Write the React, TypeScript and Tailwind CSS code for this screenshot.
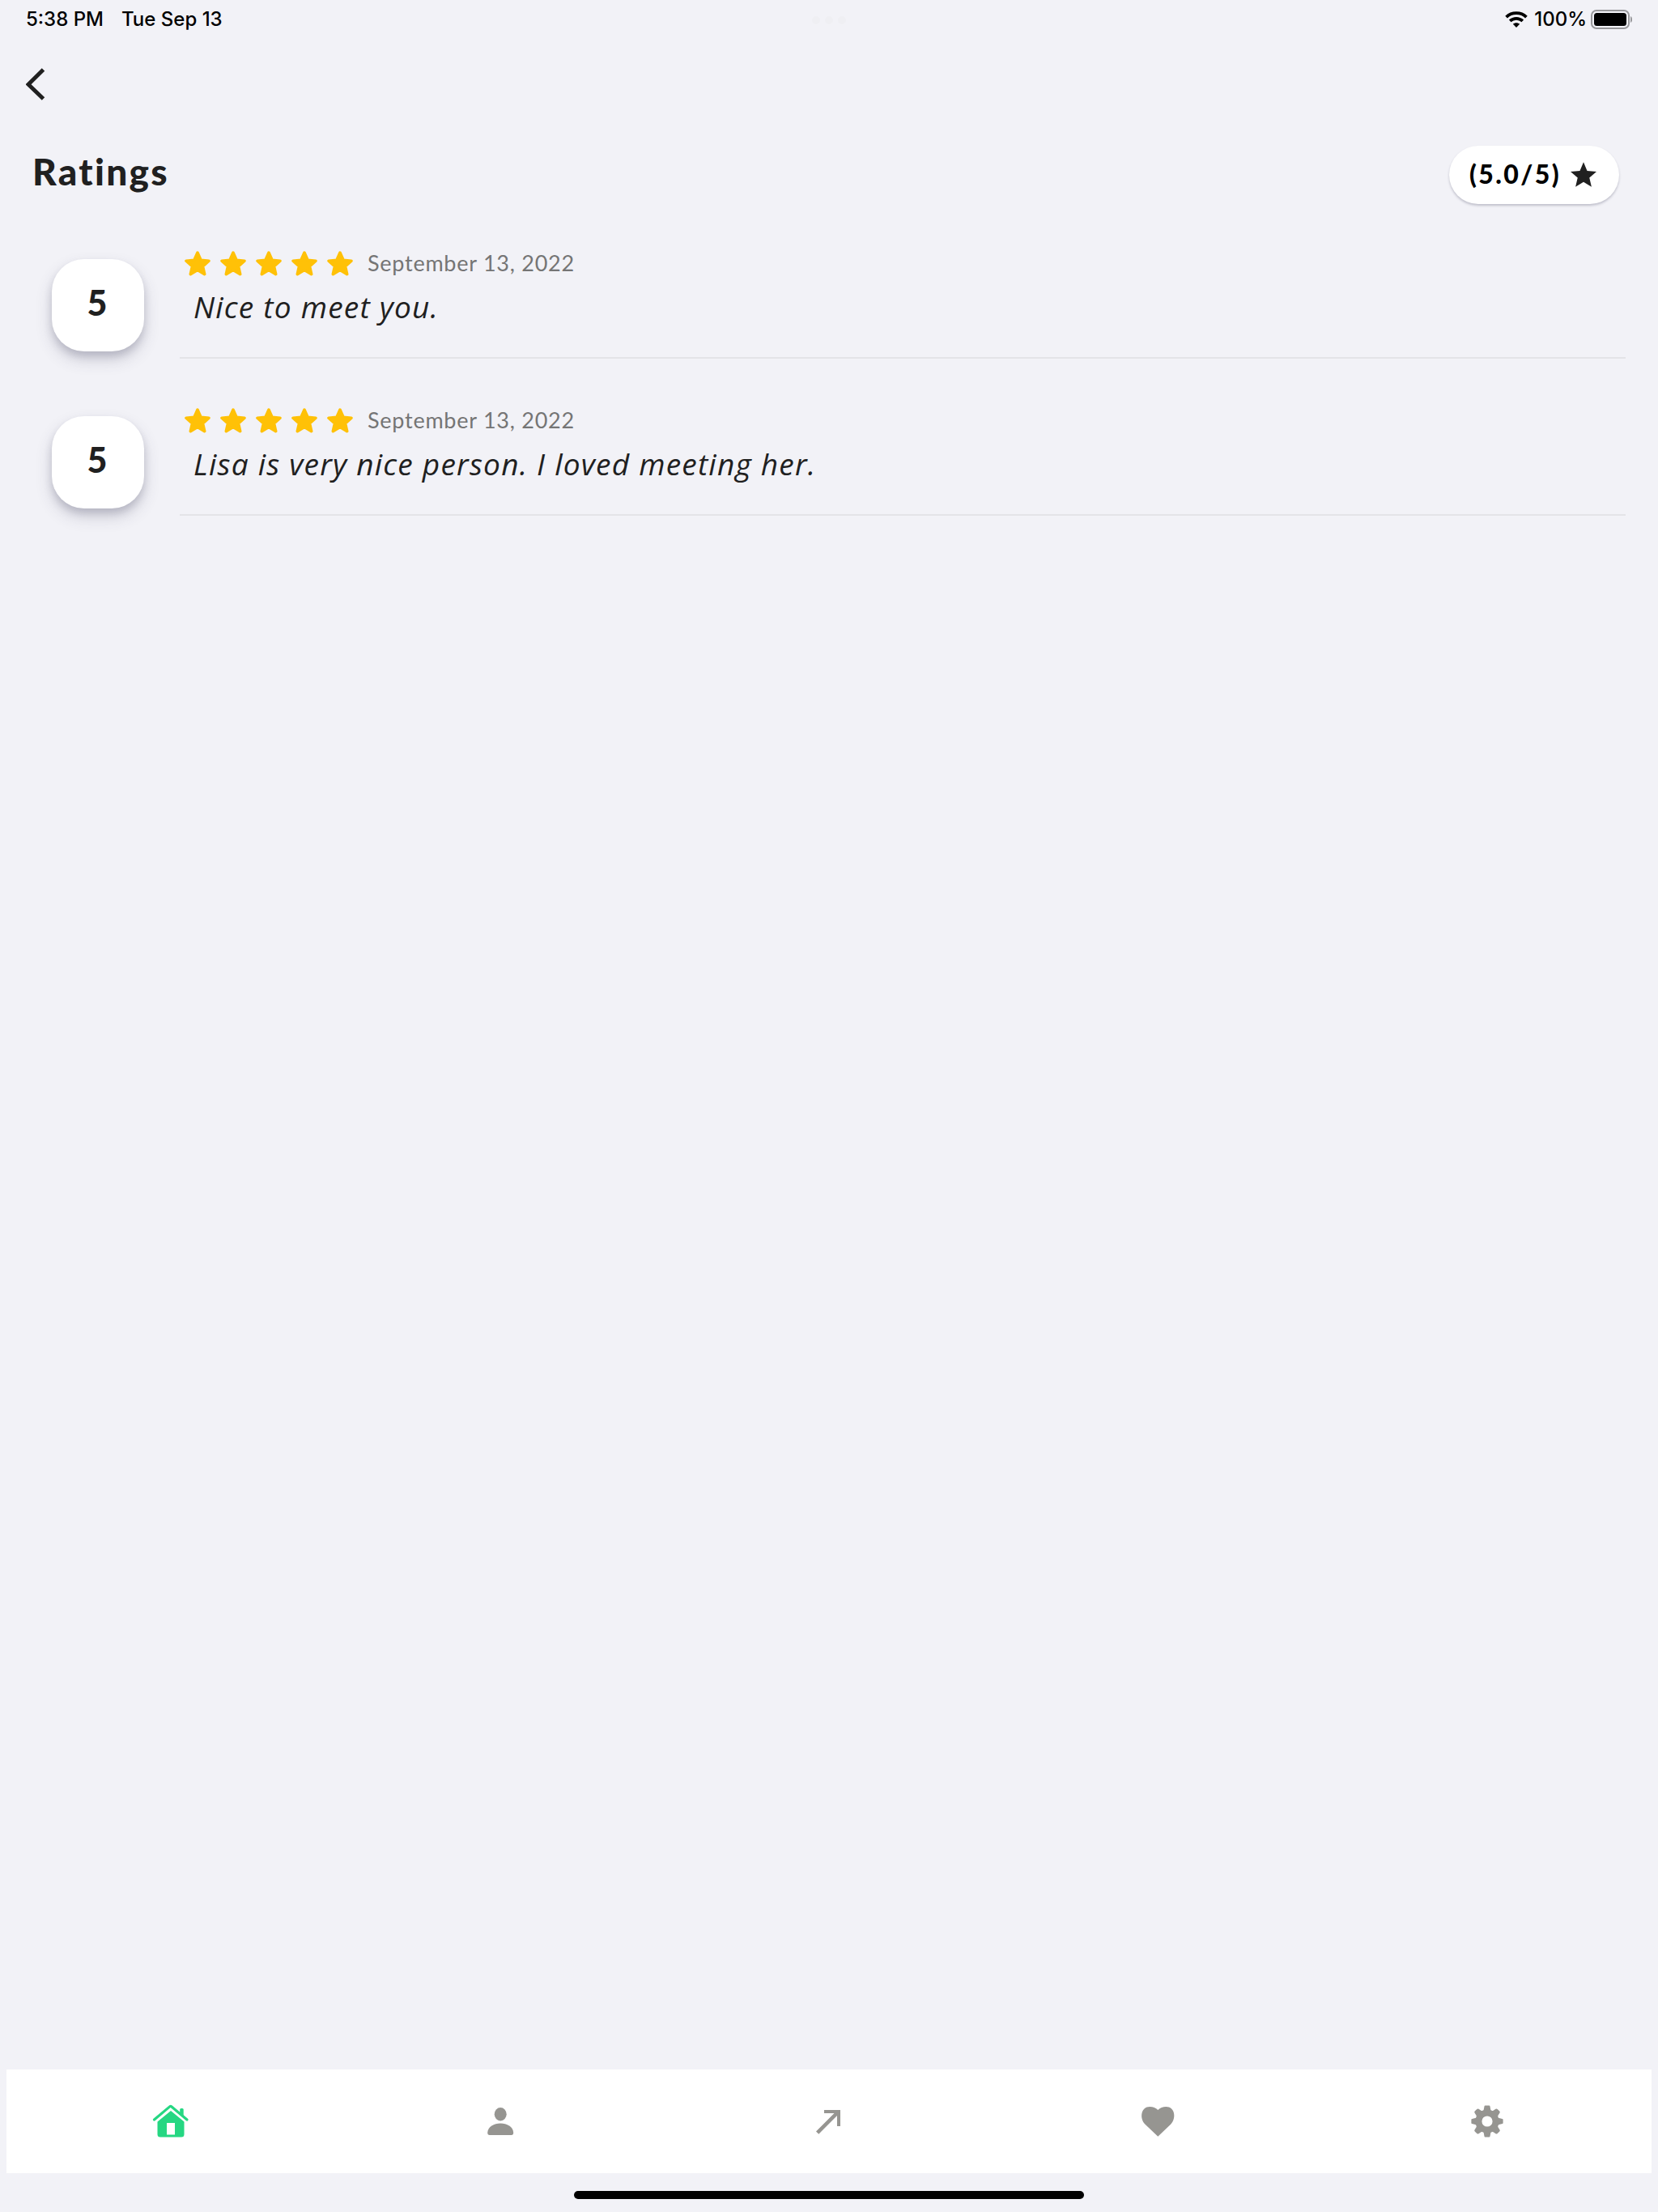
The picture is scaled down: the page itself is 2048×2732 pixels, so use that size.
import type { ReactNode } from 'react';

const reviews = [
  { score: 5, date: 'September 13, 2022', comment: 'Nice to meet you.' },
  { score: 5, date: 'September 13, 2022', comment: 'Lisa is very nice person. I loved meeting her.' },
];

function StatusBar() {
  return (
    <div className="flex h-12 items-center justify-between px-8 font-['Inter'] text-[24px] font-medium leading-none text-black">
      <div className="flex w-[400px] gap-[22px] whitespace-nowrap">
        <span>5:38 PM</span>
        <span>Tue Sep 13</span>
      </div>
      <div className="flex gap-[6px] pt-[2px]">
        <i className="size-[10px] rounded-full bg-[#efeff3]" />
        <i className="size-[10px] rounded-full bg-[#efeff3]" />
        <i className="size-[10px] rounded-full bg-[#efeff3]" />
      </div>
      <div className="flex w-[400px] items-center justify-end">
        <svg className="mr-2" width="28" height="20" viewBox="0 0 28 20" fill="none">
          <path d="M1.6 7.1C8.3.5 19.7.5 26.4 7.1" stroke="#000" strokeWidth="3.8" />
          <path d="M6.2 11.900c4.400-4.100 11.200-4.100 15.600 0" stroke="#000" strokeWidth="3.800" />
          <path d="M14 20l-4.100-4.300c2.300-2 5.900-2 8.200 0z" fill="#000" />
        </svg>
        <span>100%</span>
        <svg className="ml-[5px]" width="51" height="24" viewBox="0 0 51 24">
          <rect x="1" y="1" width="46" height="22" rx="6" fill="none" stroke="#98989b" strokeWidth="2" />
          <rect x="4" y="4" width="40" height="16" rx="3.5" />
          <path d="M49 8c3 1.400 3 6.600 0 8z" fill="#98989b" />
        </svg>
      </div>
    </div>
  );
}

function RatingStar() {
  return (
    <svg className="size-11" viewBox="0 0 44 44" fill="#ffc107">
      <path
        d="M22 8.100L26.100 17.300L36 18.200L28.500 24.900L30.700 34.600L22 29.500L13.300 34.600L15.500 24.900L8 18.200L17.900 17.300Z"
        stroke="#ffc107"
        strokeWidth="3.600"
        strokeLinejoin="round"
      />
    </svg>
  );
}

function NavItem({ children }: { children: ReactNode }) {
  return (
    <button className="flex flex-1 items-center justify-center">
      <svg width="48" height="48" viewBox="0 0 48 48" fill="#969591">
        {children}
      </svg>
    </button>
  );
}

export default function App() {
  return (
    <div className="flex h-[2732px] w-[2048px] flex-col bg-[#f2f2f7] font-['Lato',sans-serif] text-[#202020]">
      <StatusBar />
      <header className="flex h-28 items-center pl-8">
        <svg width="24" height="40" viewBox="0 0 24 40" fill="none">
          <path d="M21.500 2L3 20.200L21.500 38" stroke="#202020" strokeWidth="5" />
        </svg>
      </header>
      <div className="flex h-[110px] items-start justify-between pl-10 pr-12 pt-5">
        <h1 className="mt-1 text-[46px] font-black leading-[56px] tracking-[2.300px]">Ratings</h1>
        <div className="flex h-[72px] w-[210px] items-center rounded-full bg-white pl-[25px] shadow-[0_2px_3px_rgba(60,60,90,0.28)]">
          <span className="w-[118px] whitespace-nowrap pb-[3px] text-[32px] font-black leading-none tracking-[2.400px] text-black">(5.0/5)</span>
          <svg className="mb-[2px] ml-[7px]" width="32" height="31" viewBox="2 2 20 19" fill="#202020">
            <path d="M12 17.270L18.180 21l-1.640-7.030L22 9.240l-7.190-.61L12 2 9.190 8.630 2 9.240l5.460 4.730L5.820 21z" />
          </svg>
        </div>
      </div>
      <main className="flex-1 pt-[26px]">
        {reviews.map((review) => (
          <article key={review.comment} className="flex h-[194px] pl-16 pr-10">
            <div className="mt-6 flex size-[114px] items-center justify-center rounded-[40px] bg-white pb-2 pr-[2px] text-[43px] font-black leading-none shadow-[0_10px_20px_rgba(60,60,90,0.20),0_6px_10px_rgba(60,60,90,0.18)]">
              {review.score}
            </div>
            <div className="ml-11 flex h-[147px] flex-1 flex-col border-b-2 border-[#e4e4e8]">
              <div className="flex h-[60px] items-center">
                <div className="flex">
                  {[1, 2, 3, 4, 5].map((n) => (
                    <RatingStar key={n} />
                  ))}
                </div>
                <time className="ml-3 whitespace-nowrap pb-1 text-[27px] leading-none tracking-[0.750px] text-[#757575]">{review.date}</time>
              </div>
              <p className="-mt-px ml-[17px] whitespace-nowrap font-['Open_Sans'] text-[37px] italic leading-[48px] tracking-[1.230px]">
                {review.comment}
              </p>
            </div>
          </article>
        ))}
      </main>
      <nav className="mx-2 flex h-32 bg-white">
        <NavItem>
          <g fill="#25d782">
            <path d="M3.500 22L22.600 5.900q1.200-1 2.400 0L44 22" fill="none" stroke="#25d782" strokeWidth="3.200" strokeLinecap="round" strokeLinejoin="round" />
            <path d="M35.200 9.500q0-1.500 1.500-1.500h1.500q1.500 0 1.500 1.500V18L35.200 14Z" />
            <path fillRule="evenodd" d="M24 11L40.500 24.500V40q0 3.500-3.500 3.500H11q-3.500 0-3.500-3.500V24.500ZM19 26V40.500H29V26Z" />
          </g>
        </NavItem>
        <NavItem>
          <ellipse cx="24.200" cy="15.200" rx="7.500" ry="8.200" />
          <path d="M8.200 38C8.700 30.500 16.200 26.600 24.200 26.600S39.700 30.500 40.200 38Q40.200 41 37.700 41H10.700Q8.200 41 8.200 38Z" />
        </NavItem>
        <NavItem>
          <path d="M18 10H38V30H34V17L11.300 39.700L8 36.500L30.500 14H18Z" />
        </NavItem>
        <NavItem>
          <path d="M24.300 42.700L8.300 27.500C1.300 20 3.300 6 14.300 6Q20.300 6 24.300 10Q28.300 6 34.300 6C45.300 6 47.300 20 40.300 27.500Z" />
        </NavItem>
        <NavItem>
          <path
            fillRule="evenodd"
            d="M24 17.400a6.600 6.600 0 1 0 0 13.200a6.600 6.600 0 1 0 0-13.200ZM21.500 4.500h5q.8 0 1 1l.8 4.200q.2.600.8.800l1.200.5q.6.200 1.200-.2l3-2q1.200-.8 2.200.2l2.600 2.600q.9 1 .2 2l-2 3.200q-.4.600-.2 1.200l.6 1.400q.3.600.9.700l3.900.9q.9.200.9 1v4q0 .8-.9 1l-3.900.9q-.6.100-.9.700l-.6 1.400q-.2.600.2 1.200l2 3.200q.7 1-.2 2l-2.600 2.600q-1 1-2.200.2l-3-2q-.6-.4-1.200-.2l-1.200.5q-.6.200-.8.800l-.8 4.200q-.2 1-1 1h-5q-.8 0-1-1l-.8-4.200q-.2-.6-.8-.8l-1.200-.5q-.6-.2-1.200.2l-3 2q-1.200.8-2.200-.2l-2.600-2.600q-.9-1-.2-2l2-3.200q.4-.6.200-1.200l-.6-1.400q-.3-.6-.9-.7l-3.900-.9q-.9-.2-.9-1v-4q0-.8.900-1l3.900-.9q.6-.1.900-.7l.6-1.400q.2-.6-.2-1.200l-2-3.200q-.7-1 .2-2l2.600-2.600q1-1 2.200-.2l3 2q.6.400 1.200.2l1.200-.5q.6-.2.800-.8l.8-4.200q.2-1 1-1Z"
          />
        </NavItem>
      </nav>
      <footer className="flex h-12 justify-center pt-[22px]">
        <div className="h-[10px] w-[630px] rounded-full bg-black" />
      </footer>
    </div>
  );
}
